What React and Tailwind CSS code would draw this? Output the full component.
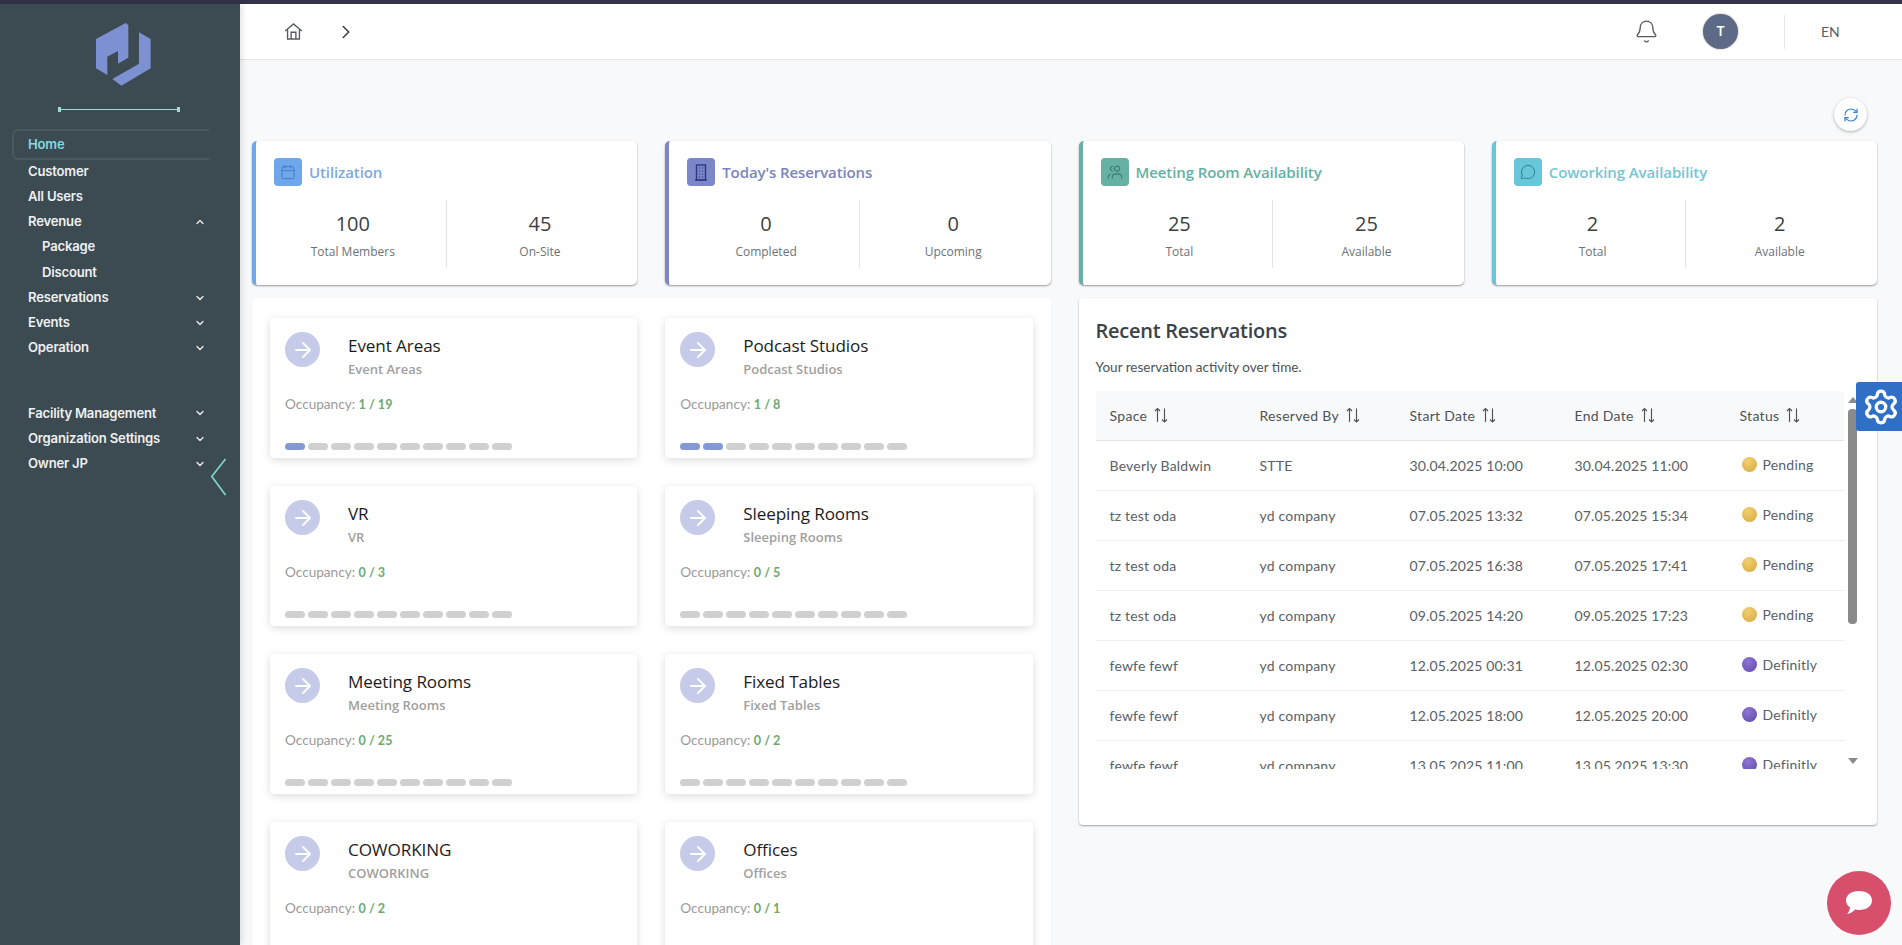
import React from "react";
import { Bell, ChevronRight, ChevronDown, ChevronUp, RefreshCw, Calendar, Users, MessageCircle, ArrowRight, Settings } from "lucide-react";

const nav = [
  { t: "Customer" }, { t: "All Users" }, { t: "Revenue", c: "up" }, { t: "Package", sub: true }, { t: "Discount", sub: true },
  { t: "Reservations", c: "down" }, { t: "Events", c: "down" }, { t: "Operation", c: "down" },
];
const nav2 = [
  { t: "Facility Management", c: "down" }, { t: "Organization Settings", c: "down" }, { t: "Owner JP", c: "down" },
];

function NavItem({ t, c, sub }) {
  return (
    <div className={`h-[25.2px] flex items-center justify-between pr-[34px] ${sub ? "pl-[42px]" : "pl-[28px]"}`}>
      <span className="text-[13.1px] font-semibold text-[#eef0f1] font-['Inter',sans-serif] tracking-[-0.2px]">{t}</span>
      {c === "up" && <ChevronUp size={12} strokeWidth={2.5} className="text-[#eef0f1]" />}
      {c === "down" && <ChevronDown size={12} strokeWidth={2.5} className="text-[#eef0f1]" />}
    </div>
  );
}

function BuildingIcon({ className }) {
  return (
    <svg width="14" height="17" viewBox="0 0 14 17" className={className} fill="none" stroke="currentColor" strokeWidth="1.4">
      <rect x="2.5" y="1" width="9" height="15" />
      <path d="M1 16 H13" />
      <path d="M5 4h1.2M8 4h1.2M5 7h1.2M8 7h1.2M5 10h1.2M8 10h1.2M5 13h1.2M8 13h1.2" strokeWidth="1.2" />
    </svg>
  );
}

function FlippedUsers({ className }) {
  return <Users size={16} strokeWidth={1.5} className={`-scale-x-100 ${className}`} />;
}

const stats = [
  { title: "Utilization", Icon: Calendar, border: "border-[#6ea8ea]", box: "bg-[#6ea8ea]", text: "text-[#7fa8dd]", a: ["100", "Total Members"], b: ["45", "On-Site"], ic: "text-[#3f7fce]" },
  { title: "Today's Reservations", Icon: BuildingIcon, border: "border-[#7c86c8]", box: "bg-[#7c86c8]", text: "text-[#7c84c0]", a: ["0", "Completed"], b: ["0", "Upcoming"], ic: "text-[#2b3a80]" },
  { title: "Meeting Room Availability", Icon: FlippedUsers, border: "border-[#66b0a4]", box: "bg-[#66b0a4]", text: "text-[#66b0a4]", a: ["25", "Total"], b: ["25", "Available"], ic: "text-[#2f6f66]" },
  { title: "Coworking Availability", Icon: MessageCircle, border: "border-[#67c6d8]", box: "bg-[#67c6d8]", text: "text-[#74c6d6]", a: ["2", "Total"], b: ["2", "Available"], ic: "text-[#2f8394]" },
];

function Stat({ s }) {
  const { Icon } = s;
  const isLucide = Icon === Calendar || Icon === MessageCircle;
  return (
    <div className={`h-[144px] bg-white rounded-[5px] border-l-4 ${s.border} shadow-[0_1px_2px_rgba(0,0,0,0.4)] pt-[17px] pl-[18px] font-['Open_Sans',sans-serif]`}>
      <div className="flex items-center gap-[7px] h-[28px]">
        <div className={`w-[28px] h-[28px] rounded-[4px] flex items-center justify-center ${s.box}`}>
          {isLucide ? <Icon size={16} strokeWidth={1.5} className={s.ic} /> : <Icon className={s.ic} />}
        </div>
        <span className={`text-[15px] font-semibold tracking-[-0.1px] ${s.text}`}>{s.title}</span>
      </div>
      <div className="grid grid-cols-2 mt-[14px] h-[68px] mr-[4px] -ml-[14px]">
        {[s.a, s.b].map((v, i) => (
          <div key={i} className={`flex flex-col items-center pt-[10px] ${i === 0 ? "border-r border-[#e3e3e3]" : ""}`}>
            <span className="text-[20px] leading-[28px] font-medium text-[#3a3f44]">{v[0]}</span>
            <span className="text-[12px] leading-[16px] mt-[6px] font-medium text-[#6d7277]">{v[1]}</span>
          </div>
        ))}
      </div>
    </div>
  );
}

const spaces = [
  { t: "Event Areas", o: "1 / 19", on: 1 }, { t: "Podcast Studios", o: "1 / 8", on: 2 },
  { t: "VR", o: "0 / 3", on: 0 }, { t: "Sleeping Rooms", o: "0 / 5", on: 0 },
  { t: "Meeting Rooms", o: "0 / 25", on: 0 }, { t: "Fixed Tables", o: "0 / 2", on: 0 },
  { t: "COWORKING", o: "0 / 2", on: 0 }, { t: "Offices", o: "0 / 1", on: 0 },
];

function Space({ s }) {
  return (
    <div className="h-[140px] bg-white rounded-[4px] shadow-[0_2px_8px_rgba(0,0,0,0.14)] px-[15px] pt-[14px] font-['Open_Sans',sans-serif]">
      <div className="flex items-start h-[50px]">
        <div className="w-[35px] h-[35px] rounded-full bg-[#c5cbe9] flex items-center justify-center">
          <ArrowRight size={24} strokeWidth={1.8} className="text-white" />
        </div>
        <div className="ml-[28px] mt-[2px]">
          <div className="text-[17.1px] leading-[24px] font-medium text-[#1c1c1c] tracking-[-0.1px]">{s.t}</div>
          <div className="text-[13px] leading-[20px] font-semibold text-[#a0a0a0] mt-[1px]">{s.t}</div>
        </div>
      </div>
      <div className="mt-[13px] text-[13.6px] leading-[18px] text-[#9a9a9a] font-['Lato',sans-serif]">
        Occupancy: <span className="font-bold text-[12.6px] text-[#6fa86f]">{s.o}</span>
      </div>
      <div className="flex gap-[3px] mt-[29px]">
        {Array.from({ length: 10 }).map((_, i) => (
          <span key={i} className={`w-[20px] h-[7px] rounded-full ${i < s.on ? "bg-[#8499d3]" : "bg-[#d0d0d0]"}`} />
        ))}
      </div>
    </div>
  );
}

const rows = [
  ["Beverly Baldwin", "STTE", "30.04.2025 10:00", "30.04.2025 11:00", "Pending"],
  ["tz test oda", "yd company", "07.05.2025 13:32", "07.05.2025 15:34", "Pending"],
  ["tz test oda", "yd company", "07.05.2025 16:38", "07.05.2025 17:41", "Pending"],
  ["tz test oda", "yd company", "09.05.2025 14:20", "09.05.2025 17:23", "Pending"],
  ["fewfe fewf", "yd company", "12.05.2025 00:31", "12.05.2025 02:30", "Definitly"],
  ["fewfe fewf", "yd company", "12.05.2025 18:00", "12.05.2025 20:00", "Definitly"],
  ["fewfe fewf", "yd company", "13.05.2025 11:00", "13.05.2025 13:30", "Definitly"],
];

function Head({ children, first, last }) {
  return (
    <th className={`text-left font-normal ${first ? "pl-[14px]" : last ? "pl-[20px]" : "pl-[19px]"}`}>
      <span className="inline-flex items-center gap-[7px] text-[14px] text-[#4d5358] tracking-[0.3px]">
        {children}
        <svg width="14" height="16" viewBox="0 0 14 16" fill="none" stroke="currentColor" strokeWidth="1.15">
          <path d="M3.5 15 V1.5 M1 4 L3.5 1.5 L6 4" />
          <path d="M10.5 1.5 V15 M8 12.5 L10.5 15 L13 12.5" />
        </svg>
      </span>
    </th>
  );
}

export default function App() {
  return (
    <div className="relative w-[1902px] h-[945px] overflow-hidden flex flex-col bg-[#f8f9fa]">
      <div className="h-[4px] shrink-0 bg-[#32334a]" />
      <div className="flex flex-1 min-h-0">
        <aside className="relative z-10 w-[240px] shrink-0 bg-[#3c4a52] shadow-[2px_0_6px_rgba(0,0,0,0.12)]">
          <div className="flex justify-center pl-[8px] pt-[19px] h-[85px]">
            <svg width="80" height="80" viewBox="0 0 240 240" className="-mt-[8px]">
              <path fill="#7c90d2" d="M36 72 L125 24 L133 30 L133 128 L102 146 L102 108 L70 125 L70 180 L36 160 Z" />
              <path fill="#7c90d2" d="M165 52 L200 72 L200 160 L112 212 L85 192 L165 146 Z" />
            </svg>
          </div>
          <div className="relative ml-[59px] mt-[20px] w-[120px] h-[1px] bg-[#9fdcd8]">
            <span className="absolute -left-[1px] -top-[2px] w-[3px] h-[5px] bg-[#9fdcd8]" />
            <span className="absolute -right-[1px] -top-[2px] w-[3px] h-[5px] bg-[#9fdcd8]" />
          </div>
          <nav className="mt-[19px]">
            <div className="ml-[12px] w-[197px] h-[31px] flex items-center pl-[14px] border-2 border-r-0 border-[#4a585f] rounded-l-[6px]">
              <span className="text-[13.1px] font-semibold text-[#7fdbe6] font-['Inter',sans-serif] tracking-[-0.2px]">Home</span>
            </div>
            <div className="-mt-[1px]">
              {nav.map((n) => <NavItem key={n.t} {...n} />)}
            </div>
            <div className="h-[40.4px]" />
            {nav2.map((n) => <NavItem key={n.t} {...n} />)}
          </nav>
          <svg width="18" height="38" viewBox="0 0 18 38" fill="none" stroke="#7fcfc8" strokeWidth="1.8" className="absolute left-[210px] top-[454px]">
            <path d="M15.5 1 L1.8 18.5 L15.5 37" />
          </svg>
        </aside>

        <main className="flex-1 min-w-0 flex flex-col">
          <header className="h-[56px] shrink-0 bg-white border-b border-[#e2e4e6] flex items-center text-[#5a5f64] font-['Lato',sans-serif]">
            <svg width="19" height="19" viewBox="0 0 24 24" fill="none" stroke="#555b60" strokeWidth="1.7" className="ml-[44px]">
              <path d="M1.5 11.5 L12 2.5 L22.5 11.5" />
              <path d="M4.5 9.5 V21.5 H19.5 V9.5" />
              <path d="M9 21.5 V13 H15 V21.5" />
            </svg>
            <ChevronRight size={22} strokeWidth={1.5} className="ml-[32px] text-[#333]" />
            <div className="flex-1" />
            <Bell size={25} strokeWidth={1.2} className="text-[#555b60]" />
            <div className="ml-[44.5px] w-[35px] h-[35px] rounded-full bg-[#5d6a85] flex items-center justify-center text-white text-[13px] font-semibold font-['Inter',sans-serif] shadow-[0_0_2px_rgba(0,0,0,0.4)]">T</div>
            <div className="ml-[46px] w-px h-[34px] bg-[#e6e6e6]" />
            <span className="ml-[36px] mr-[62px] text-[14px] w-[19px]">EN</span>
          </header>
          <div className="flex-1 min-h-0 pl-[12px] pr-[25px]">
            <div className="h-[81px] flex justify-end items-start pt-[38px]">
              <div className="w-[33px] h-[33px] mr-[10px] rounded-full bg-white shadow-[0_1px_3px_rgba(0,0,0,0.3)] flex items-center justify-center">
                <RefreshCw size={16} strokeWidth={1.8} className="text-[#3f82cf]" />
              </div>
            </div>
            <div className="grid grid-cols-2 gap-x-[28px]">
              <div className="flex flex-col gap-[13px]">
                <div className="grid grid-cols-2 gap-[28px]">
                  <Stat s={stats[0]} />
                  <Stat s={stats[1]} />
                </div>
                <div className="bg-white rounded-[4px] pt-[20px] pl-[18px] pr-[18px] h-[700px] shadow-[0_0_2px_rgba(0,0,0,0.05)]">
                  <div className="grid grid-cols-2 gap-x-[28px] gap-y-[28px]">
                    {spaces.map((s) => <Space key={s.t} s={s} />)}
                  </div>
                </div>
              </div>
              <div className="flex flex-col gap-[13px] items-stretch">
                <div className="grid grid-cols-2 gap-[28px]">
                  <Stat s={stats[2]} />
                  <Stat s={stats[3]} />
                </div>
                <div className="relative h-[527px] bg-white rounded-[4px] shadow-[0_1px_2px_rgba(0,0,0,0.35)] pl-[17px] font-['Lato',sans-serif]">
                  <h2 className="pt-[19px] text-[20px] leading-[28px] font-semibold text-[#3c4248] font-['Open_Sans',sans-serif] tracking-[-0.25px]">Recent Reservations</h2>
                  <p className="mt-[12px] text-[13.5px] leading-[20px] text-[#4d5358]">Your reservation activity over time.</p>
                  <div className="mt-[14px] w-[748px] h-[378px] overflow-hidden">
                    <table className="w-full table-fixed border-collapse text-[14px] text-[#5a6066] tracking-[0.2px]">
                      <colgroup>
                        <col className="w-[145px]" /><col className="w-[150px]" /><col className="w-[165px]" /><col className="w-[164px]" /><col className="w-[124px]" />
                      </colgroup>
                      <thead>
                        <tr className="h-[49px] bg-[#f8f9fa] border-b border-[#e3e5e7]">
                          <Head first>Space</Head><Head>Reserved By</Head><Head>Start Date</Head><Head>End Date</Head><Head last>Status</Head>
                        </tr>
                      </thead>
                      <tbody>
                        {rows.map((r, i) => (
                          <tr key={i} className="h-[50px] border-b border-[#eceef0]">
                            <td className="pl-[14px]">{r[0]}</td>
                            <td className="pl-[19px]">{r[1]}</td>
                            <td className="pl-[19px] tracking-[0.15px]">{r[2]}</td>
                            <td className="pl-[19px] tracking-[0.15px]">{r[3]}</td>
                            <td className="pl-[22px]">
                              <span className="inline-flex items-center gap-[6px]">
                                <span className={`w-[15px] h-[15px] rounded-full ${r[4] === "Pending" ? "bg-[radial-gradient(circle_at_40%_30%,#f0d070,#d8a640)]" : "bg-[radial-gradient(circle_at_40%_30%,#8f74d4,#5f4ba6)]"}`} />
                                {r[4]}
                              </span>
                            </td>
                          </tr>
                        ))}
                      </tbody>
                    </table>
                  </div>
                  <span className="absolute left-[769px] top-[99px] w-0 h-0 border-x-[5px] border-x-transparent border-b-[6px] border-b-[#8a8a8a]" />
                  <span className="absolute left-[769px] top-[111px] w-[9px] h-[215px] rounded-[4px] bg-[#8a8a8a]" />
                  <span className="absolute left-[769px] top-[460px] w-0 h-0 border-x-[5px] border-x-transparent border-t-[6px] border-t-[#8a8a8a]" />
                </div>
              </div>
            </div>
          </div>
        </main>
      </div>

      <div className="absolute right-0 top-[382px] w-[46px] h-[49px] bg-[#2f6fc6] rounded-l-[3px] flex items-center justify-center pl-[3px]">
        <Settings size={38} strokeWidth={2.1} className="text-white" />
      </div>
      <div className="absolute left-[1827px] top-[871px] w-[64px] h-[64px] rounded-full bg-[#d84f6c] flex items-center justify-center">
        <svg width="30" height="28" viewBox="0 0 30 28">
          <path fill="#fff" d="M15 2 C23 2 28 6 28 11.5 C28 17 23 21 15 21 C13.5 21 12 20.8 11 20.5 C9 23 6 24.5 3 25 C5 23 6 20.5 6 18.5 C3.5 16.8 2 14.4 2 11.5 C2 6 7 2 15 2 Z" />
        </svg>
      </div>
    </div>
  );
}
